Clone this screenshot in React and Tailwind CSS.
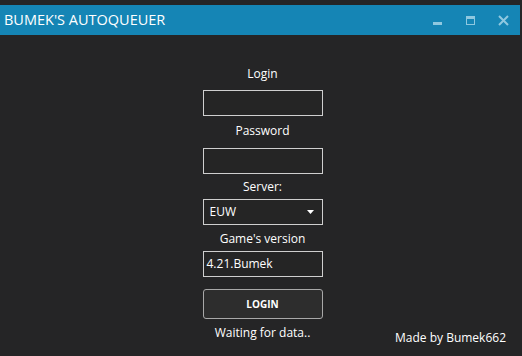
import React from "react";

function TitleBar() {
  return (
    <div className="flex h-[30px] w-[520px] items-center bg-[#1585b5] text-white">
      <span className="ml-[4px] text-[14.5px] leading-none">BUMEK'S AUTOQUEUER</span>
      <div className="ml-auto flex h-full items-center">
        {/* minimize */}
        <div className="flex h-full w-[33px] items-center justify-center">
          <div className="mt-[6px] h-[3px] w-[9px] bg-[#8fc8e0]" />
        </div>
        {/* maximize */}
        <div className="flex h-full w-[33px] items-center justify-center">
          <div className="h-[9px] w-[9px] border border-t-[3px] border-[#8fc8e0]" />
        </div>
        {/* close */}
        <div className="flex h-full w-[33px] items-center justify-center">
          <svg width="11" height="11" viewBox="0 0 11 11">
            <path d="M1 1L10 10M10 1L1 10" stroke="#8fc8e0" strokeWidth="2" />
          </svg>
        </div>
      </div>
    </div>
  );
}

function Label({ children, className = "" }) {
  return <div className={"h-[16px] text-center text-[12px] leading-[16px] text-white " + className}>{children}</div>;
}

function Field({ value = "", className = "" }) {
  return (
    <div className={"flex h-[26px] w-[120px] items-center border-[1.5px] border-[#cfcfcf] bg-[#252525] px-[2px] text-[12px] text-white " + className}>
      {value}
    </div>
  );
}

export default function App() {
  return (
    <div
      className="relative h-[356px] w-[522px] overflow-hidden bg-[#252526]"
      style={{ fontFamily: '"Open Sans", "Noto Sans", sans-serif' }}
    >
      <div className="h-[5px]" />
      <TitleBar />

      <div className="flex flex-col items-center pl-[3px]">
        <Label className="mt-[31px]">Login</Label>
        <Field className="mt-[8px]" />
        <Label className="mt-[7px]">Password</Label>
        <Field className="mt-[9px]" />
        <Label className="mt-[5px]">Server:</Label>
        <div className="mt-[4px] flex h-[26px] w-[120px] items-center justify-between border-[1.5px] border-[#cfcfcf] bg-[#252525] pl-[6px] pr-[8px] text-[12px] text-white">
          <span>EUW</span>
          <svg width="7" height="4" viewBox="0 0 7 4">
            <path d="M0 0H7L3.5 4Z" fill="#ffffff" />
          </svg>
        </div>
        <Label className="mt-[6px]">Game's version</Label>
        <Field className="mt-[4px] pl-[3px]" value="4.21.Bumek" />
        <button className="mt-[12px] h-[30px] w-[120px] rounded-[3px] border border-[#a8a8a8] bg-[#2d2d2d] text-[10px] font-bold text-white">
          LOGIN
        </button>
        <Label className="mt-[6px]">Waiting for data..</Label>
      </div>

      <div className="absolute bottom-[10px] right-[16px] text-[12px] leading-[16px] text-white">Made by Bumek662</div>
    </div>
  );
}
